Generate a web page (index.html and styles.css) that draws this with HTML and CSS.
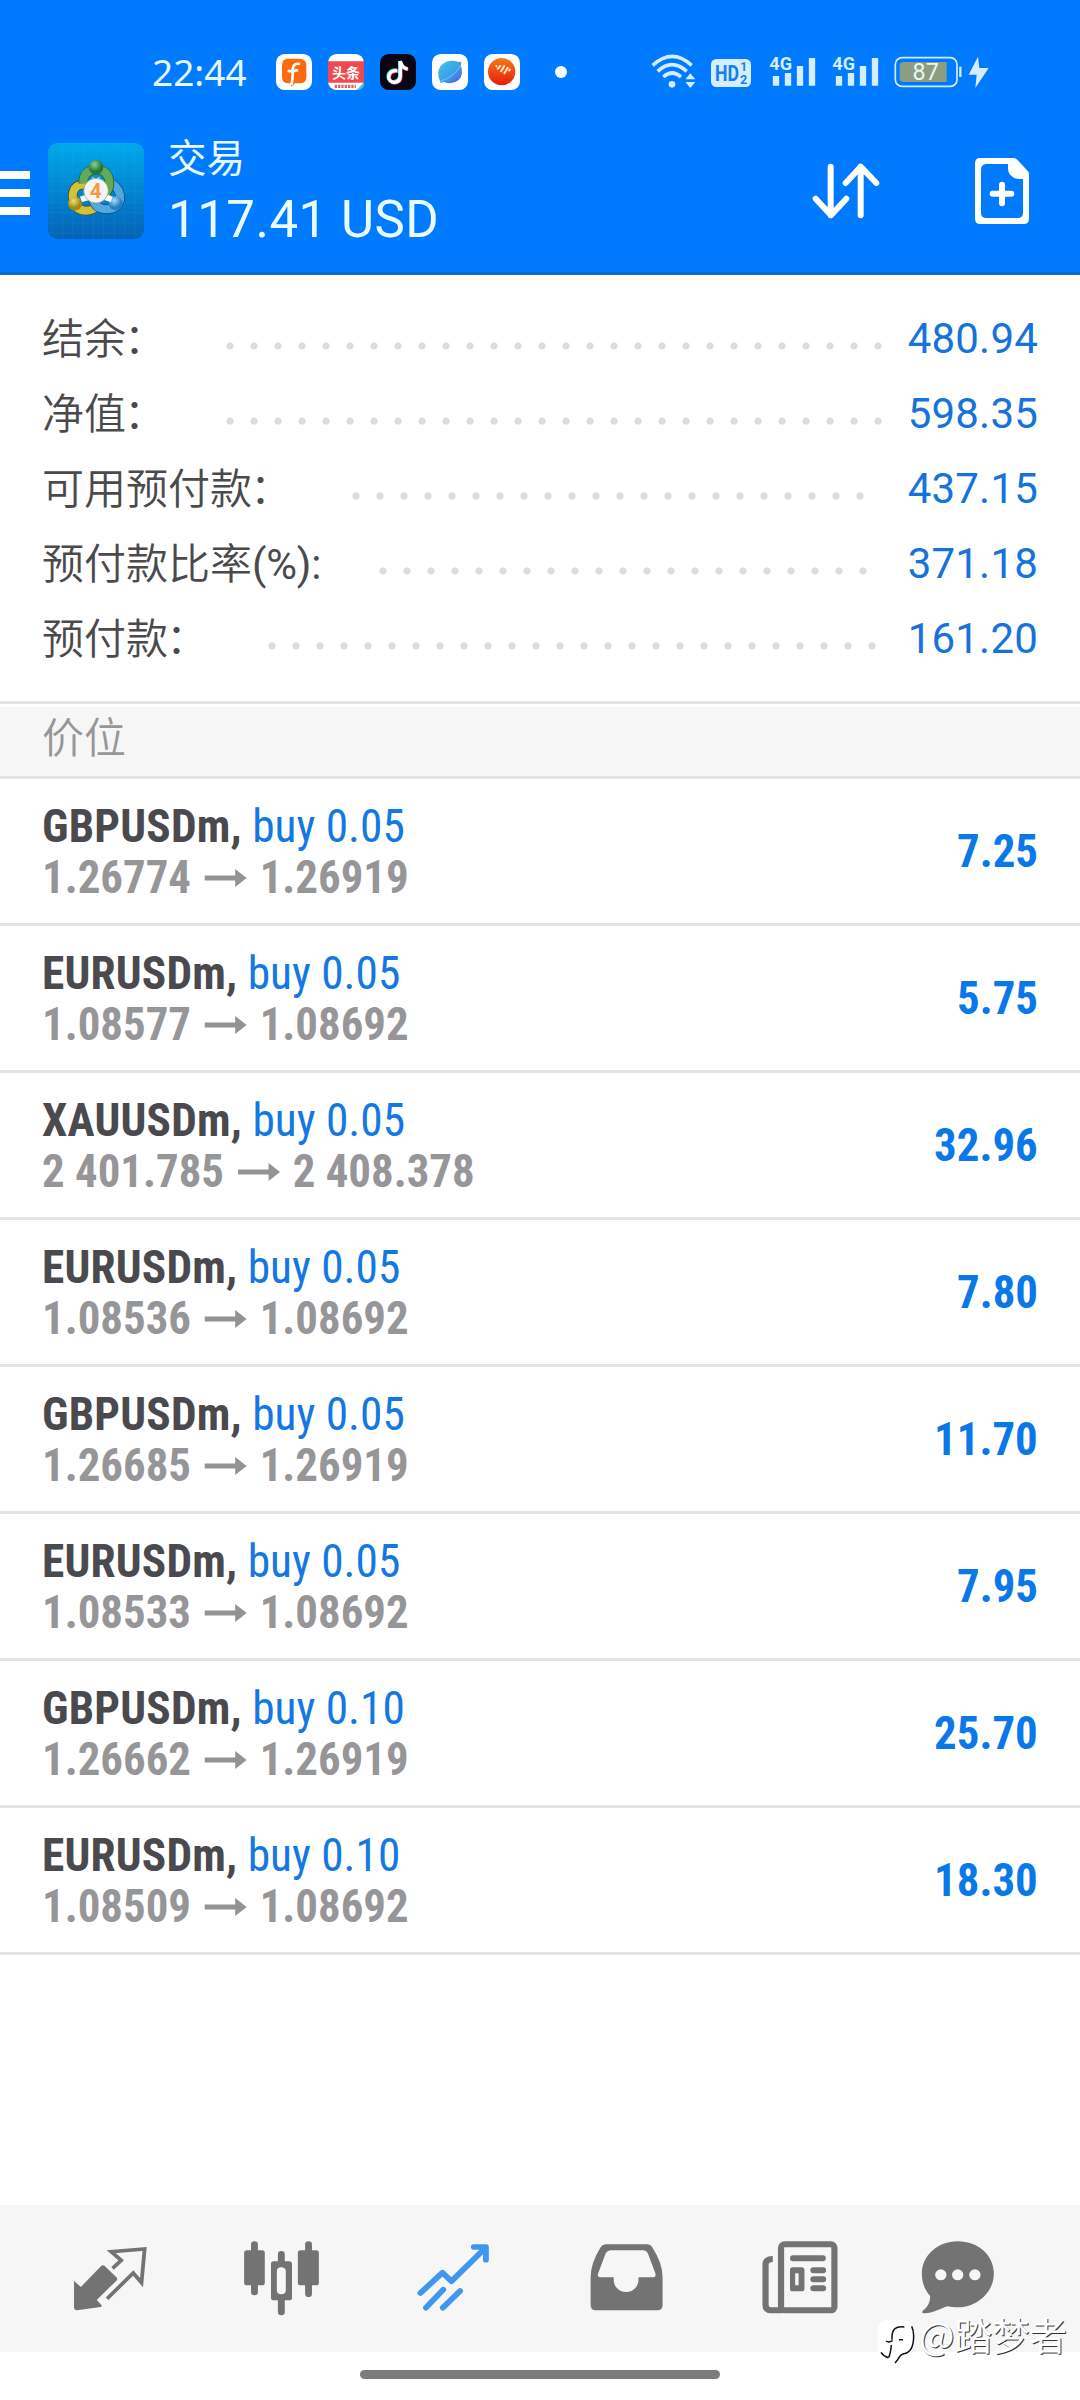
FILE: index.html
```html
<!DOCTYPE html>
<html lang="zh-CN">
<head>
<meta charset="utf-8">
<title>交易</title>
<link rel="stylesheet" href="styles.css">
</head>
<body>
<div class="screen">
  <header class="header">
    <div class="status">
      <span class="clock">22:44</span>
      <div class="apps">
        <svg class="app" viewBox="0 0 108 108"><rect width="108" height="108" rx="26" fill="#fff"/><path d="M36 14h34q21 0 21 22v32q0 20-20 20h-14l-11 10-2-10h-6q-20 0-20-20V36q0-22 18-22z" fill="#fb6a0c"/><path d="M72 30c-20-4-22 10-22 22 0 16 0 30-4 40M35 50q14 4 31-2" fill="none" stroke="#fff" stroke-width="8"/></svg>
        <svg class="app" viewBox="0 0 108 108"><rect width="108" height="108" rx="26" fill="#fff"/><path d="M0 22h108v64H0z" fill="#f04a50"/><text class="toutiao" x="54" y="71" text-anchor="middle">头条</text><path d="M20 97h64" stroke="#e0656a" stroke-width="10" stroke-dasharray="7 3"/><path d="M108 84v10q-3 10-14 14h-8z" fill="#48c7d2"/></svg>
        <svg class="app" viewBox="0 0 108 108"><rect width="108" height="108" rx="26" fill="#080613"/><g fill="none" stroke-width="10"><path d="M50 48c-34-2-32 37-8 35 12-1 17-8 17-20V22c3 14 10 20 22 22" stroke="#35e6df"/><path d="M54 52c-34-2-32 37-8 35 12-1 17-8 17-20V25c3 14 10 20 22 22" stroke="#f13b65"/><path d="M52 50c-34-2-32 37-8 35 12-1 17-8 17-20V21c3 16 10 22 22 24" stroke="#fff"/></g></svg>
        <svg class="app" viewBox="0 0 108 108"><defs><linearGradient id="planet" x1="0" y1="0" x2="1" y2="1"><stop offset="0" stop-color="#3dc8e6"/><stop offset=".6" stop-color="#3d9be8"/><stop offset="1" stop-color="#5a48d8"/></linearGradient></defs><rect width="108" height="108" rx="26" fill="#fff"/><path d="M80 24q12-4 6 10Q97 60 80 78 60 94 36 84q-14 6-12-4Q12 58 26 36 48 12 80 24z" fill="url(#planet)"/><path d="M87 33Q66 70 24 82" stroke="#70c9f5" stroke-width="3" fill="none"/></svg>
        <svg class="app" viewBox="0 0 108 108"><defs><linearGradient id="ball" x1="0" y1="0" x2="0" y2="1"><stop offset="0" stop-color="#f37a15"/><stop offset="1" stop-color="#e91c0b"/></linearGradient></defs><rect width="108" height="108" rx="26" fill="#fff"/><circle cx="53" cy="53" r="41" fill="url(#ball)"/><path d="M35 38l4-3M40 46l10-12M50 54l12-20M60 60l12-20M74 52l5-8" stroke="#ffe9d0" stroke-width="6"/></svg>
      </div>
      <i class="more-dot"></i>
      <div class="signals">
        <svg width="46" height="36" viewBox="64 40 138 108"><g fill="none" stroke="#d4edff" stroke-width="11"><path d="M69 77q59-54 117 0"/><path d="M84 95q43-40 87 0"/><path d="M101 112q26-24 53 0"/></g><circle cx="127" cy="134" r="10" fill="#d4edff"/><path d="M182 101l15 18h-30zM182 145l15-18h-30z" fill="#d4edff"/></svg>
        <svg class="hd" width="40" height="28" viewBox="0 0 120 84"><rect width="120" height="84" rx="16" fill="#d4edff"/><g fill="#147ff2" class="glyph"><text x="12" y="66" font-size="66" textLength="72" lengthAdjust="spacingAndGlyphs">HD</text><text x="88" y="37" font-size="36">1</text><text x="87" y="75" font-size="38">2</text></g></svg>
        <svg class="cell cell-a" width="47" height="34" viewBox="418 42 141 102"><text class="glyph" x="419" y="90" font-size="56" fill="#d4edff" textLength="68" lengthAdjust="spacingAndGlyphs">4G</text><path d="M439 108v29M475 99v38M511 78v59M547 54v83" stroke="#d4edff" stroke-width="19"/></svg>
        <svg class="cell cell-b" width="47" height="34" viewBox="418 42 141 102"><text class="glyph" x="419" y="90" font-size="56" fill="#d4edff" textLength="68" lengthAdjust="spacingAndGlyphs">4G</text><path d="M439 108v29M475 99v38M511 78v59M547 54v83" stroke="#d4edff" stroke-width="19"/></svg>
        <svg class="battery" width="96" height="34" viewBox="793 45 288 102"><rect x="797" y="53" width="185" height="86" rx="20" fill="none" stroke="#d4edff" stroke-width="5"/><path d="M822 66h129v60H822q-12 0-12-12V78q0-12 12-12z" fill="#8c9d82"/><path d="M992 80v31" stroke="#d4edff" stroke-width="7"/><text class="charge" x="888" y="121" font-size="70" text-anchor="middle" fill="#e9f7f4">87</text><path d="M1045 50l-28 54h24l-4 40 40-60h-28z" fill="#d4edff"/></svg>
      </div>
    </div>
    <div class="bar">
      <svg class="menu" width="30" height="44" viewBox="0 0 30 44"><path d="M0 4h30M0 22h30M0 40h30" stroke="#fff" stroke-width="8"/></svg>
      <svg class="logo" viewBox="144 69 288 288">
        <defs>
          <linearGradient id="tile" x1="0" y1="0" x2="0" y2="1"><stop offset="0" stop-color="#00a9ec"/><stop offset="1" stop-color="#0561b5"/></linearGradient>
          <pattern id="grid" x="155" y="90" width="31" height="31" patternUnits="userSpaceOnUse"><path d="M31 0H0V31" fill="none" stroke="#42b5e6" stroke-opacity=".35" stroke-width="2"/></pattern>
          <radialGradient id="green" cx=".4" cy=".3"><stop offset="0" stop-color="#8bd28a"/><stop offset="1" stop-color="#237735"/></radialGradient>
          <radialGradient id="gold" cx=".4" cy=".3"><stop offset="0" stop-color="#eee17a"/><stop offset="1" stop-color="#a08a12"/></radialGradient>
          <radialGradient id="sky" cx=".4" cy=".3"><stop offset="0" stop-color="#a9dcf8"/><stop offset="1" stop-color="#2480c4"/></radialGradient>
        </defs>
        <rect x="144" y="69" width="288" height="288" rx="28" fill="url(#tile)"/>
        <rect x="144" y="69" width="288" height="288" rx="28" fill="url(#grid)"/>
        <g fill="none">
          <path d="M264 194q-44-6-46 34 2 44 42 44 24 0 32-20" stroke="#4f4a14" stroke-width="29"/>
          <path d="M264 194q-44-6-46 34 2 44 42 44 24 0 32-20" stroke="#d2c13b" stroke-width="24"/>
          <path d="M336 190q28 20 24 50-8 28-40 28-34-2-40-28" stroke="#104f82" stroke-width="29"/>
          <path d="M336 190q28 20 24 50-8 28-40 28-34-2-40-28" stroke="#50a9df" stroke-width="24"/>
          <path d="M250 190q-2-38 38-42 42 2 40 48-2 14-10 24" stroke="#1c632d" stroke-width="29"/>
          <path d="M250 190q-2-38 38-42 42 2 40 48-2 14-10 24" stroke="#62aa5a" stroke-width="24"/>
        </g>
        <circle cx="288" cy="142" r="22" fill="url(#green)"/><circle cx="225" cy="251" r="21" fill="url(#gold)"/><circle cx="347" cy="250" r="21" fill="url(#sky)"/>
        <path d="M277 170l10 8 12-8-4 18h-16zM240 230l16-6 12 16-22 6zM312 240l12-16 14 6-6 16z" fill="#fff"/>
        <circle cx="288" cy="212" r="37" fill="#f4f4f4" stroke="#8b8f70" stroke-width="2"/>
        <text class="glyph" x="287" y="233" font-size="62" text-anchor="middle" fill="#f49a45">4</text>
      </svg>
      <div class="heading">
        <div class="title">交易</div>
        <div class="profit">117.41 USD</div>
      </div>
      <svg class="sort" width="68" height="56" viewBox="96 99 204 168"><path d="M152 110v146M107 206l46 50 46-50M242 256V110M197 159l45-49 47 49" fill="none" stroke="#fff" stroke-width="18" stroke-linecap="round" stroke-linejoin="round"/></svg>
      <svg class="add" width="54" height="66" viewBox="585 84 162 198"><path fill="#fff" fill-rule="evenodd" d="M601 84h100q6 0 11 5l29 32q6 5 6 11v134q0 16-16 16H601q-16 0-16-16V100q0-16 16-16zM619 102q-16 0-16 18v128q0 16 16 16h94q16 0 16-16V147h-14q-31-6-31-31v-14z"/><path d="M666 164v56M638 191h56" stroke="#fff" stroke-width="18" stroke-linecap="round"/></svg>
    </div>
  </header>

  <section class="summary">
    <div class="line"><span class="label">结余<span class="colon">：</span></span><i class="dots dots-28"></i><span class="amount">480.94</span></div>
    <div class="line"><span class="label">净值<span class="colon">：</span></span><i class="dots dots-28"></i><span class="amount">598.35</span></div>
    <div class="line"><span class="label">可用预付款<span class="colon">：</span></span><i class="dots dots-22"></i><span class="amount">437.15</span></div>
    <div class="line"><span class="label">预付款比率<span class="percent">(%):</span></span><i class="dots dots-21"></i><span class="amount">371.18</span></div>
    <div class="line"><span class="label">预付款<span class="colon">：</span></span><i class="dots dots-26"></i><span class="amount">161.20</span></div>
  </section>

  <h2 class="section-title">价位</h2>

  <main class="positions">
    <div class="position"><div><div class="deal"><b>GBPUSDm,</b> <span>buy 0.05</span></div><div class="prices">1.26774<svg class="arrow" viewBox="0 0 44 18"><path d="M0 6.500h32V0l12 9-12 9v-6.500H0z"/></svg>1.26919</div></div><b class="gain">7.25</b></div>
    <div class="position"><div><div class="deal"><b>EURUSDm,</b> <span>buy 0.05</span></div><div class="prices">1.08577<svg class="arrow" viewBox="0 0 44 18"><path d="M0 6.500h32V0l12 9-12 9v-6.500H0z"/></svg>1.08692</div></div><b class="gain">5.75</b></div>
    <div class="position"><div><div class="deal"><b>XAUUSDm,</b> <span>buy 0.05</span></div><div class="prices">2 401.785<svg class="arrow" viewBox="0 0 44 18"><path d="M0 6.500h32V0l12 9-12 9v-6.500H0z"/></svg>2 408.378</div></div><b class="gain">32.96</b></div>
    <div class="position"><div><div class="deal"><b>EURUSDm,</b> <span>buy 0.05</span></div><div class="prices">1.08536<svg class="arrow" viewBox="0 0 44 18"><path d="M0 6.500h32V0l12 9-12 9v-6.500H0z"/></svg>1.08692</div></div><b class="gain">7.80</b></div>
    <div class="position"><div><div class="deal"><b>GBPUSDm,</b> <span>buy 0.05</span></div><div class="prices">1.26685<svg class="arrow" viewBox="0 0 44 18"><path d="M0 6.500h32V0l12 9-12 9v-6.500H0z"/></svg>1.26919</div></div><b class="gain">11.70</b></div>
    <div class="position"><div><div class="deal"><b>EURUSDm,</b> <span>buy 0.05</span></div><div class="prices">1.08533<svg class="arrow" viewBox="0 0 44 18"><path d="M0 6.500h32V0l12 9-12 9v-6.500H0z"/></svg>1.08692</div></div><b class="gain">7.95</b></div>
    <div class="position"><div><div class="deal"><b>GBPUSDm,</b> <span>buy 0.10</span></div><div class="prices">1.26662<svg class="arrow" viewBox="0 0 44 18"><path d="M0 6.500h32V0l12 9-12 9v-6.500H0z"/></svg>1.26919</div></div><b class="gain">25.70</b></div>
    <div class="position"><div><div class="deal"><b>EURUSDm,</b> <span>buy 0.10</span></div><div class="prices">1.08509<svg class="arrow" viewBox="0 0 44 18"><path d="M0 6.500h32V0l12 9-12 9v-6.500H0z"/></svg>1.08692</div></div><b class="gain">18.30</b></div>
  </main>

  <nav class="tabs">
    <svg class="tab" preserveAspectRatio="none" viewBox="69.7 44 499.5 441"><path d="M215 272l20 18 58-62q6-6 12 0l33 33q5 5 0 10l-57 58 14 16q2 4-3 5l-68 10q-9 0-9-9z"/><path d="M327 234l25-24-29-26 97-8-9 101-24-29-76 77" fill="none" stroke="#737373" stroke-width="11"/></svg>
    <svg class="tab" preserveAspectRatio="none" viewBox="569.2 44 499.5 441"><rect x="709" y="180" width="60" height="105" rx="8"/><rect x="865" y="180" width="61" height="105" rx="8"/><path fill-rule="evenodd" d="M795 213h45q8 0 8 8v101q0 8-8 8h-45q-8 0-8-8V221q0-8 8-8zM816 231q-12 0-12 12v57q0 12 13 12t13-12v-57q0-12-14-12z"/><path d="M739 163v142M896 163v147M817 192v25M817 325v40" stroke="#737373" stroke-width="20" stroke-linecap="round"/></svg>
    <svg class="tab" preserveAspectRatio="none" viewBox="1068.6 44 499.5 441"><path d="M1221 308l64-61 26 26 96-98M1237 352l50-54M1286 352l50-50M1376 170h35v38" fill="none" stroke="#4197f0" stroke-width="17" stroke-linecap="round" stroke-linejoin="round"/></svg>
    <svg class="tab" preserveAspectRatio="none" viewBox="0 44 499.5 441"><path fill-rule="evenodd" d="M191 162h122q8 0 13 9 30 48 30 90v84q0 15-15 15H162q-15 0-15-15v-84q0-42 29-90 6-9 15-9zM207 180q-12 0-17 11l-21 58q-4 12 6 12h39v8a36 36 0 0 0 72 0v-8h43q9 0 6-12l-21-58q-5-11-15-11z"/></svg>
    <svg class="tab" preserveAspectRatio="none" viewBox="499.5 44 499.5 441"><g fill="none" stroke="#737373" stroke-width="18"><rect x="700" y="162" width="155" height="198" rx="10"/><path d="M676 206q-21 0-21 17v120q0 17 18 17h30"/><path d="M735 204h86M794 240h28M794 267h28M794 294h28" stroke-linecap="round"/></g><path fill-rule="evenodd" d="M734 231h26q8 0 8 8v56q0 8-8 8h-26q-8 0-8-8v-56q0-8 8-8zM741 249v36h10v-36z"/></svg>
    <svg class="tab" preserveAspectRatio="none" viewBox="999 44 499.5 441"><path fill-rule="evenodd" d="M1213 153c60 0 105 42 105 97s-48 101-105 101c-12 0-20-1-28-3-18 3-40 22-71 21q-8-2-1-9c16-12 20-28 20-43-15-17-24-40-24-67 0-54 46-97 104-97zM1164 237a16 16 0 1 0 0 33 16 16 0 1 0 0-33zM1213 237a16 16 0 1 0 0 33 16 16 0 1 0 0-33zM1263 237a16 16 0 1 0 0 33 16 16 0 1 0 0-33z"/></svg>
  </nav>
  <div class="home"></div>

  <div class="watermark">
    <svg width="40" height="45" viewBox="44 328 120 135"><path d="M84 331h40q36 0 36 40v32c0 40-34 34-54 58l-4-16H80q-28 0-28-34v-44q0-36 32-36z" fill="#fff"/><path d="M132 352c-26-3-36 6-37 28v10M77 394q8 6 20-1M93 406q-2 24-8 38M62 428q8 12 22 16M116 390h12M154 350q6 12 6 28c0 42-14 52-30 54-16 4-12 14-26 28" fill="none" stroke="#111" stroke-width="4.500"/></svg>
    <span>@踏梦者</span>
  </div>
</div>
</body>
</html>
```
FILE: styles.css
```css
* { box-sizing: border-box; }
body {
  margin: 0;
  background: #fff;
  font-family: Roboto, "Noto Sans CJK SC", sans-serif;
}
svg { display: block; flex: none; }
.screen {
  position: relative;
  width: 1080px;
  height: 2400px;
  display: flex;
  flex-direction: column;
  overflow: hidden;
}

/* header */
.header {
  height: 275px;
  background: #007aff;
  border-bottom: 3px solid #1169cc;
}
.status {
  height: 110px;
  padding: 18px 0 0 152px;
  display: flex;
  align-items: flex-start;
}
.clock {
  width: 124px;
  margin-top: 29px;
  font: 37px/50px "Noto Sans", sans-serif;
  color: #e6f8ff;
}
.apps { display: flex; gap: 16px; margin-top: 36px; }
.app { width: 36px; height: 36px; }
.toutiao { font: bold 42px "Noto Sans CJK SC", sans-serif; fill: #fff; }
.more-dot {
  width: 12px;
  height: 12px;
  margin: 48px 0 0 35px;
  border-radius: 50%;
  background: #fff;
}
.signals { display: flex; margin: 35px 0 0 84px; }
.hd { margin: 6px 0 0 14px; }
.cell { margin-top: 1px; }
.cell-a { margin-left: 18px; }
.cell-b { margin-left: 16px; }
.battery { margin: 2px 0 0 15px; }
.glyph { font-family: Roboto, sans-serif; font-weight: 700; }
.charge { font-family: Roboto, sans-serif; }

.bar { display: flex; align-items: flex-start; }
.menu { margin-top: 61px; }
.logo { width: 96px; height: 96px; margin: 33px 0 0 18px; }
.heading { width: 644px; padding: 25px 0 0 24px; color: #e9fbff; }
.title { font-size: 38.5px; line-height: 48px; }
.profit {
  font-size: 51px;
  line-height: 60px;
  letter-spacing: .5px;
  margin: 7px 0 0 0;
}
.sort { margin: 53px 0 0 24px; }
.add { margin: 48px 0 0 95px; }

/* account summary */
.summary {
  height: 429px;
  padding: 25px 43px 0 42px;
  border-bottom: 3px solid #e3e3e3;
}
.line { display: flex; height: 75px; align-items: center; }
.label {
  margin-top: -4px;
  font-size: 42px;
  font-weight: 350;
  color: #4a4a4c;
  white-space: nowrap;
}
.colon { margin: 0 2px 0 -2px; }
.percent { font-weight: 400; letter-spacing: -.2px; }
.dots {
  height: 8px;
  margin: 16px 0 0 50px;
  background: radial-gradient(circle, #dcdcdc 0 3.2px, transparent 4px) 0 0 / 24px 8px repeat-x;
}
.dots-28 { width: 672px; }
.dots-26 { width: 624px; }
.dots-22 { width: 528px; }
.dots-21 { width: 504px; }
.amount {
  margin: 2px -1px 0 auto;
  font-size: 42px;
  color: #1673dc;
  letter-spacing: .2px;
}

.section-title {
  height: 72px;
  margin: 3px 0 0;
  padding-left: 42px;
  background: #f6f6f6;
  border-bottom: 3px solid #e3e3e3;
  font-size: 42px;
  line-height: 63px;
  font-weight: 350;
  color: #969698;
}

/* open positions */
.position {
  height: 147px;
  padding: 21px 42px 0 42px;
  display: flex;
  justify-content: space-between;
  border-bottom: 3px solid #e3e3e3;
  font-size: 47px;
  line-height: 51px;
  font-stretch: 75%;
}
.deal { transform: scaleX(.964); transform-origin: left; }
.deal b { color: #4a4a4e; letter-spacing: .2px; }
.deal span { color: #1378e4; }
.prices {
  display: flex;
  font-weight: 700;
  color: #969699;
  white-space: pre;
  transform: scaleX(.954);
  transform-origin: left;
}
.arrow { width: 45px; height: 18px; margin: 18px 13px 0 14px; fill: #939396; }
.gain {
  margin-top: 25px;
  color: #0a78e8;
  transform: scaleX(.953);
  transform-origin: right;
}

/* bottom navigation */
.tabs {
  height: 147px;
  margin-top: 250px;
  padding: 0 24px;
  display: flex;
  background: #f6f6f6;
}
.tab { width: 172px; height: 147px; fill: #737373; }
.home {
  width: 360px;
  height: 9px;
  margin: 18px auto 0;
  border-radius: 5px;
  background: #7c7c7c;
}
.watermark {
  position: absolute;
  left: 875px;
  top: 2319px;
  display: flex;
  gap: 4px;
  font: 37.5px/44px "Noto Sans CJK SC", sans-serif;
  color: #fff;
  text-shadow: 1px 1px 0 #333;
  white-space: nowrap;
}
.watermark span { margin-top: -7px; }
```
